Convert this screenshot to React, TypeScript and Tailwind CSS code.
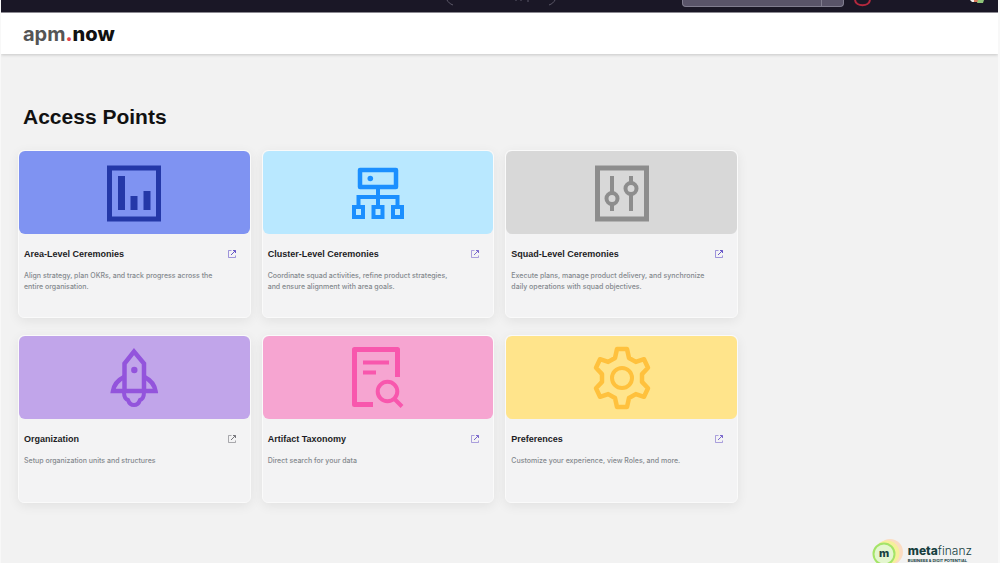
import type { ReactNode } from 'react';

interface AccessPoint {
  title: string;
  description: string;
  banner: string;
  iconColor: string;
  linkColor: string;
  icon: ReactNode;
}

const accessPoints: AccessPoint[] = [
  {
    title: 'Area-Level Ceremonies',
    description: 'Align strategy, plan OKRs, and track progress across the\nentire organisation.',
    banner: 'bg-[#7f93f2]',
    iconColor: 'text-[#2438a8]',
    linkColor: 'text-[#6655c8]',
    icon: (
      <>
        <rect x="7.5" y="7" width="49" height="51" strokeWidth="5" />
        <path d="M16 15h7v34h-7zM28.500 35h7v14h-7zM41.500 30h7v19h-7z" fill="currentColor" stroke="none" />
      </>
    ),
  },
  {
    title: 'Cluster-Level Ceremonies',
    description: 'Coordinate squad activities, refine product strategies,\nand ensure alignment with area goals.',
    banner: 'bg-[#b9e8ff]',
    iconColor: 'text-[#1b8fff]',
    linkColor: 'text-[#7a68cc]',
    icon: (
      <>
        <rect x="14" y="9" width="36" height="17" strokeWidth="4.500" strokeLinejoin="round" />
        <circle cx="24.300" cy="17.500" r="2.800" fill="currentColor" stroke="none" />
        <path d="M32 26v18M12.500 44V36h39v8" strokeWidth="4" />
        <path d="M8 46h9v10H8zM27.500 46h9v10h-9zM47 46h9v10h-9z" strokeWidth="4" />
      </>
    ),
  },
  {
    title: 'Squad-Level Ceremonies',
    description: 'Execute plans, manage product delivery, and synchronize\ndaily operations with squad objectives.',
    banner: 'bg-[#d8d8d8]',
    iconColor: 'text-[#8d8d8d]',
    linkColor: 'text-[#6655c8]',
    icon: (
      <>
        <rect x="7.500" y="7" width="49" height="51" strokeWidth="5" />
        <path d="M22 15v17M22 43v7M41 15v7M41 33v17" strokeWidth="4" />
        <circle cx="22" cy="37.500" r="5.500" strokeWidth="4" />
        <circle cx="41" cy="27.500" r="5.500" strokeWidth="4" />
      </>
    ),
  },
  {
    title: 'Organization',
    description: 'Setup organization units and structures',
    banner: 'bg-[#c1a5ea]',
    iconColor: 'text-[#9354dc]',
    linkColor: 'text-[#77777c]',
    icon: (
      <>
        <path d="M22.500 45V17.500L32 5.500l10 12V45" strokeWidth="4.500" />
        <path d="M22 31c-6 3-10 8-11 14h42.500c-1-6-5-11-11-14" strokeWidth="4.500" />
        <path d="M22 46c0 4 1 7 4 8 1 3 3 5 6 5s5-2 6-5c3-1 4-4 4-8" strokeWidth="4" />
        <circle cx="32.300" cy="24" r="3.200" fill="currentColor" stroke="none" />
      </>
    ),
  },
  {
    title: 'Artifact Taxonomy',
    description: 'Direct search for your data',
    banner: 'bg-[#f6a5d1]',
    iconColor: 'text-[#f857ad]',
    linkColor: 'text-[#7a68cc]',
    icon: (
      <>
        <path d="M27 58.500H8.500v-55h43V31" strokeWidth="5" strokeLinejoin="round" />
        <path d="M17 16.500h26M17 26.500h13" strokeWidth="4" />
        <circle cx="41.500" cy="45.500" r="9.800" strokeWidth="4" />
        <path d="M48.500 53l7.500 7.500" strokeWidth="4" />
      </>
    ),
  },
  {
    title: 'Preferences',
    description: 'Customize your experience, view Roles, and more.',
    banner: 'bg-[#ffe48b]',
    iconColor: 'text-[#ffc13d]',
    linkColor: 'text-[#7a68cc]',
    icon: (
      <>
        <path
          d="M27 3h10l2 9 6.800 3.900 8.200-2.700 4 8.600-6 6.300v7.800l6 6.300-4 8.600-8.200-2.700L39 52l-2 9H27l-2-9-6.800-3.900-8.200 2.700-4-8.600 6-6.300v-7.800L6 21.800l4-8.600 8.200 2.700L25 12z"
          strokeWidth="4.500"
          strokeLinejoin="round"
        />
        <circle cx="32" cy="32" r="10" strokeWidth="4" />
      </>
    ),
  },
];

function OpenIcon() {
  return (
    <svg viewBox="0 0 10 10" className="size-[10px]" fill="none" stroke="currentColor" strokeWidth="1" aria-hidden="true">
      <path d="M4.500 1.500h-3v7h7v-2" opacity="0.600" />
      <path d="M6 1.500h2.500V4M8.500 1.500L4 6" />
    </svg>
  );
}

function AccessCard({ point }: { point: AccessPoint }) {
  return (
    <article className="min-h-[168px] rounded-md border border-[#fafafa] bg-[#f3f3f4] shadow-[0_3px_12px_rgba(0,0,0,0.07)]">
      <div className={`flex h-[83px] items-center justify-center rounded-md ${point.banner}`}>
        <svg viewBox="0 0 64 64" className={`size-16 ${point.iconColor}`} fill="none" stroke="currentColor" aria-hidden="true">
          {point.icon}
        </svg>
      </div>
      <div className="px-[5px] pt-[14px]">
        <div className="flex items-center justify-between pr-2">
          <h2 className="text-[9px] leading-[12px] font-bold text-[#1c1c24]">{point.title}</h2>
          <a href="#" aria-label={`Open ${point.title}`} className={point.linkColor}>
            <OpenIcon />
          </a>
        </div>
        <p className="mt-[10px] [font-family:Inter,sans-serif] text-[7px] leading-[11px] font-medium whitespace-pre-line text-[#84898e]">
          {point.description}
        </p>
      </div>
    </article>
  );
}

function TopBar() {
  return (
    <div className="flex h-[13px] shrink-0 items-start overflow-hidden border-b border-[#8f8d96] bg-[#1a1726]">
      <svg viewBox="0 0 110 6" className="ml-[445px] h-[6px] w-[110px]" fill="none" stroke="#5b5868" strokeWidth="1" aria-hidden="true">
        <path d="M1 0c1 2 3 4 6 5M109 0c-1 2-3 4-6 5M70 0v1M75 0v1M82 0v2" />
      </svg>
      <div className="ml-auto flex h-[7px] w-[162px] rounded-b-sm border border-t-0 border-[#807d8f] bg-[#595469]">
        <div className="ml-auto w-[22px] border-l border-[#807d8f]" />
      </div>
      <svg viewBox="0 0 20 7" className="ml-2 h-[7px] w-5" fill="none" stroke="#b3283d" strokeWidth="2" aria-hidden="true">
        <path d="M3 0c1 7 14 7 15 0" />
      </svg>
      <svg viewBox="0 0 14 4" className="mr-[14px] ml-[98px] h-1 w-[14px]" aria-hidden="true">
        <path d="M0 0h5v2H2z" fill="#f4f0ea" />
        <path d="M4 0h4v2H4z" fill="#d97b5c" />
        <path d="M8 0h6l-1 3H7z" fill="#8fc479" />
      </svg>
    </div>
  );
}

function MetafinanzLogo() {
  return (
    <div className="flex items-start gap-1">
      <svg viewBox="0 0 34 28" className="h-7 w-[34px]" fill="none" aria-hidden="true">
        <circle cx="20" cy="13" r="13" fill="#fbdcc2" />
        <circle cx="17" cy="14" r="12.500" fill="#f6f09a" />
        <circle cx="14" cy="15" r="10.500" fill="#e4f6cf" stroke="#a4e468" strokeWidth="2" />
        <text x="14" y="18" textAnchor="middle" fontSize="11" fontWeight="800" fill="#17403f" fontFamily="Inter, sans-serif">
          m
        </text>
      </svg>
      <div className="pt-[5px] [font-family:Inter,sans-serif] text-[#17403f]">
        <p className="text-[12px] leading-[14px]">
          <span className="font-extrabold">meta</span>
          <span className="font-light">finanz</span>
        </p>
        <p className="text-[4px] leading-[6px] font-bold whitespace-nowrap">BUSINESS &amp; DIGIT POTENTIAL</p>
      </div>
    </div>
  );
}

export default function App() {
  return (
    <div className="flex h-screen flex-col overflow-hidden border-r-2 border-l border-[#f8f8f8] bg-[#f2f2f2] font-['Liberation_Sans',Arial,sans-serif]">
      <TopBar />
      <header className="flex h-[41px] shrink-0 items-center bg-white px-[22px] shadow-[0_1px_3px_rgba(0,0,0,0.18)]">
        <a href="#" className="[font-family:Inter,sans-serif] text-[20px] leading-6 font-extrabold text-[#111111]">
          <span className="font-bold text-[#555555]">apm</span>
          <span className="text-[#e0434b]">.</span>
          now
        </a>
      </header>
      <main className="flex-1 pt-[50px] pl-[17px]">
        <h1 className="pl-[5px] text-[21px] leading-[26px] font-bold text-[#111111]">Access Points</h1>
        <section className="mt-5 grid w-[720px] max-w-full grid-cols-3 gap-x-[11px] gap-y-[17px]">
          {accessPoints.map((point) => (
            <AccessCard key={point.title} point={point} />
          ))}
        </section>
      </main>
      <footer className="flex h-6 shrink-0 justify-end pr-[26px]">
        <MetafinanzLogo />
      </footer>
    </div>
  );
}
